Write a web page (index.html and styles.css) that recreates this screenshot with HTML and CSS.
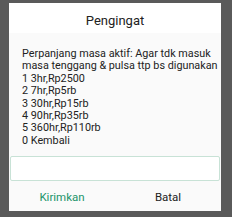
FILE: index.html
```html
<!DOCTYPE html>
<html lang="en">
<head>
    <meta charset="UTF-8">
    <title>Pengingat</title>
    <link rel="stylesheet" href="styles.css">
</head>
<body>
    <div class="dialog">
        <div class="dialog-title">Pengingat</div>
        <div class="dialog-body">
            <p class="message">Perpanjang masa aktif: Agar tdk masuk<br>masa tenggang &amp; pulsa ttp bs digunakan<br>1 3hr,Rp2500<br>2 7hr,Rp5rb<br>3 30hr,Rp15rb<br>4 90hr,Rp35rb<br>5 360hr,Rp110rb<br>0 Kembali</p>
            <input type="text" class="reply">
        </div>
        <div class="actions">
            <button class="btn btn-send">Kirimkan</button>
            <button class="btn">Batal</button>
        </div>
    </div>
</body>
</html>
```

FILE: styles.css
```css
html, body {
    margin: 0;
    height: 100%;
}

body {
    background-color: #5a5a5a;
    font-family: Roboto, "Noto Sans", sans-serif;
    padding: 3px 11px 0 9px;
    box-sizing: border-box;
}

.dialog {
    background-color: #fafafa;
    width: 212px;
    height: 208px;
    display: flex;
    flex-direction: column;
}

.dialog-title {
    background-color: #fff;
    height: 30px;
    line-height: 36px;
    text-align: center;
    font-size: 13px;
    color: #222;
}

.dialog-body {
    flex: 1;
    padding: 15px 1px 0 1px;
}

.message {
    margin: 0 0 0 12px;
    font-size: 10.8px;
    line-height: 12.4px;
    color: #222;
}

.reply {
    display: block;
    box-sizing: border-box;
    width: 210px;
    height: 25px;
    margin-top: 9px;
    border: 1px solid #c8e2d6;
    border-radius: 2px;
    background-color: #fff;
    outline: none;
}

.actions {
    display: flex;
    height: 30px;
}

.btn {
    flex: 1;
    background: none;
    border: none;
    font-family: inherit;
    font-size: 11.5px;
    color: #222;
    padding: 2px 0 0 0;
}

.btn-send {
    color: #22946a;
}
```
